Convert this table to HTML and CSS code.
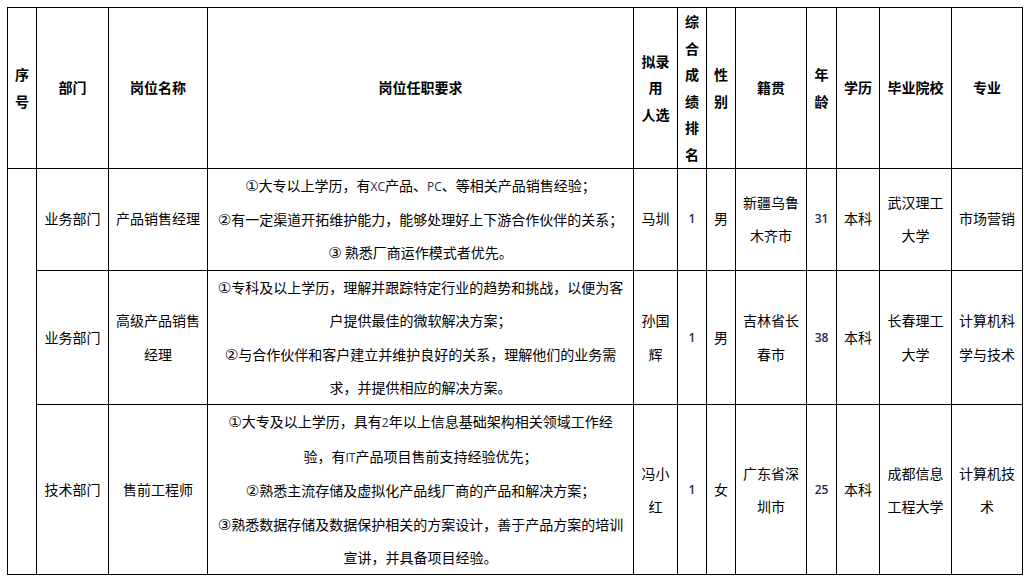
FILE: index.html
```html
<!DOCTYPE html>
<html lang="zh-CN">
<head>
<meta charset="utf-8">
<title>拟录用人选</title>
<link rel="stylesheet" href="styles.css">
</head>
<body>
<table class="roster">
  <colgroup>
    <col class="c-no"><col class="c-dept"><col class="c-pos"><col class="c-req">
    <col class="c-name"><col class="c-rank"><col class="c-sex"><col class="c-home">
    <col class="c-age"><col class="c-edu"><col class="c-school"><col class="c-major">
  </colgroup>
  <thead>
    <tr>
      <th>序<br>号</th>
      <th>部门</th>
      <th>岗位名称</th>
      <th>岗位任职要求</th>
      <th>拟录<br>用<br>人选</th>
      <th>综<br>合<br>成<br>绩<br>排<br>名</th>
      <th>性<br>别</th>
      <th>籍贯</th>
      <th>年<br>龄</th>
      <th>学历</th>
      <th>毕业院校</th>
      <th>专业</th>
    </tr>
  </thead>
  <tbody>
    <tr>
      <td rowspan="3"></td>
      <td>业务部门</td>
      <td>产品销售经理</td>
      <td class="req"><span class="circ">①</span>大专以上学历，有<span class="lat">XC</span>产品、<span class="lat">PC</span>、等相关产品销售经验；<br><span class="circ">②</span>有一定渠道开拓维护能力，能够处理好上下游合作伙伴的关系；<br><span class="circ">③</span> 熟悉厂商运作模式者优先。</td>
      <td>马圳</td>
      <td class="num">1</td>
      <td>男</td>
      <td>新疆乌鲁<br>木齐市</td>
      <td class="num">31</td>
      <td>本科</td>
      <td>武汉理工<br>大学</td>
      <td>市场营销</td>
    </tr>
    <tr>
      <td>业务部门</td>
      <td>高级产品销售<br>经理</td>
      <td class="req"><span class="circ">①</span>专科及以上学历，理解并跟踪特定行业的趋势和挑战，以便为客<br>户提供最佳的微软解决方案；<br><span class="circ">②</span>与合作伙伴和客户建立并维护良好的关系，理解他们的业务需<br>求，并提供相应的解决方案。</td>
      <td>孙国<br>辉</td>
      <td class="num">1</td>
      <td>男</td>
      <td>吉林省长<br>春市</td>
      <td class="num">38</td>
      <td>本科</td>
      <td>长春理工<br>大学</td>
      <td>计算机科<br>学与技术</td>
    </tr>
    <tr>
      <td>技术部门</td>
      <td>售前工程师</td>
      <td class="req"><span class="circ">①</span>大专及以上学历，具有<span class="lat">2</span>年以上信息基础架构相关领域工作经<br>验，有<span class="lat">IT</span>产品项目售前支持经验优先；<br><span class="circ">②</span>熟悉主流存储及虚拟化产品线厂商的产品和解决方案；<br><span class="circ">③</span>熟悉数据存储及数据保护相关的方案设计，善于产品方案的培训<br>宣讲，并具备项目经验。</td>
      <td>冯小<br>红</td>
      <td class="num">1</td>
      <td>女</td>
      <td>广东省深<br>圳市</td>
      <td class="num">25</td>
      <td>本科</td>
      <td>成都信息<br>工程大学</td>
      <td>计算机技<br>术</td>
    </tr>
  </tbody>
</table>
</body>
</html>
```

FILE: styles.css
```css
html, body {
  margin: 0;
  padding: 0;
  background: #ffffff;
}
body {
  padding: 7px 0 0 7px;
  font-family: "Noto Sans CJK SC", "Noto Sans", sans-serif;
  font-size: 14px;
  color: #000000;
}
.roster {
  border-collapse: collapse;
  table-layout: fixed;
  width: 1016px;
}
.roster th,
.roster td {
  border: 1px solid #000000;
  padding: 0;
  text-align: center;
  vertical-align: middle;
  overflow: hidden;
  white-space: nowrap;
}
.roster th {
  font-weight: bold;
  line-height: 26.6px;
}
.roster td {
  font-weight: normal;
  line-height: 33.4px;
}
.c-no { width: 29px; }
.c-dept { width: 72px; }
.c-pos { width: 99px; }
.c-req { width: 426px; }
.c-name { width: 44px; }
.c-rank { width: 29px; }
.c-sex { width: 29px; }
.c-home { width: 71px; }
.c-age { width: 30px; }
.c-edu { width: 43px; }
.c-school { width: 72px; }
.c-major { width: 71px; }
.circ {
  font-family: "DejaVu Sans", sans-serif;
  font-size: 15px;
  line-height: 1;
}
.lat {
  font-family: "Open Sans", "Liberation Sans", sans-serif;
  font-size: 12px;
  color: #1d2b52;
}
.roster td.num {
  font-family: "Open Sans", "Liberation Sans", sans-serif;
  font-size: 12px;
  font-weight: 600;
  color: #1d2b52;
}
```
